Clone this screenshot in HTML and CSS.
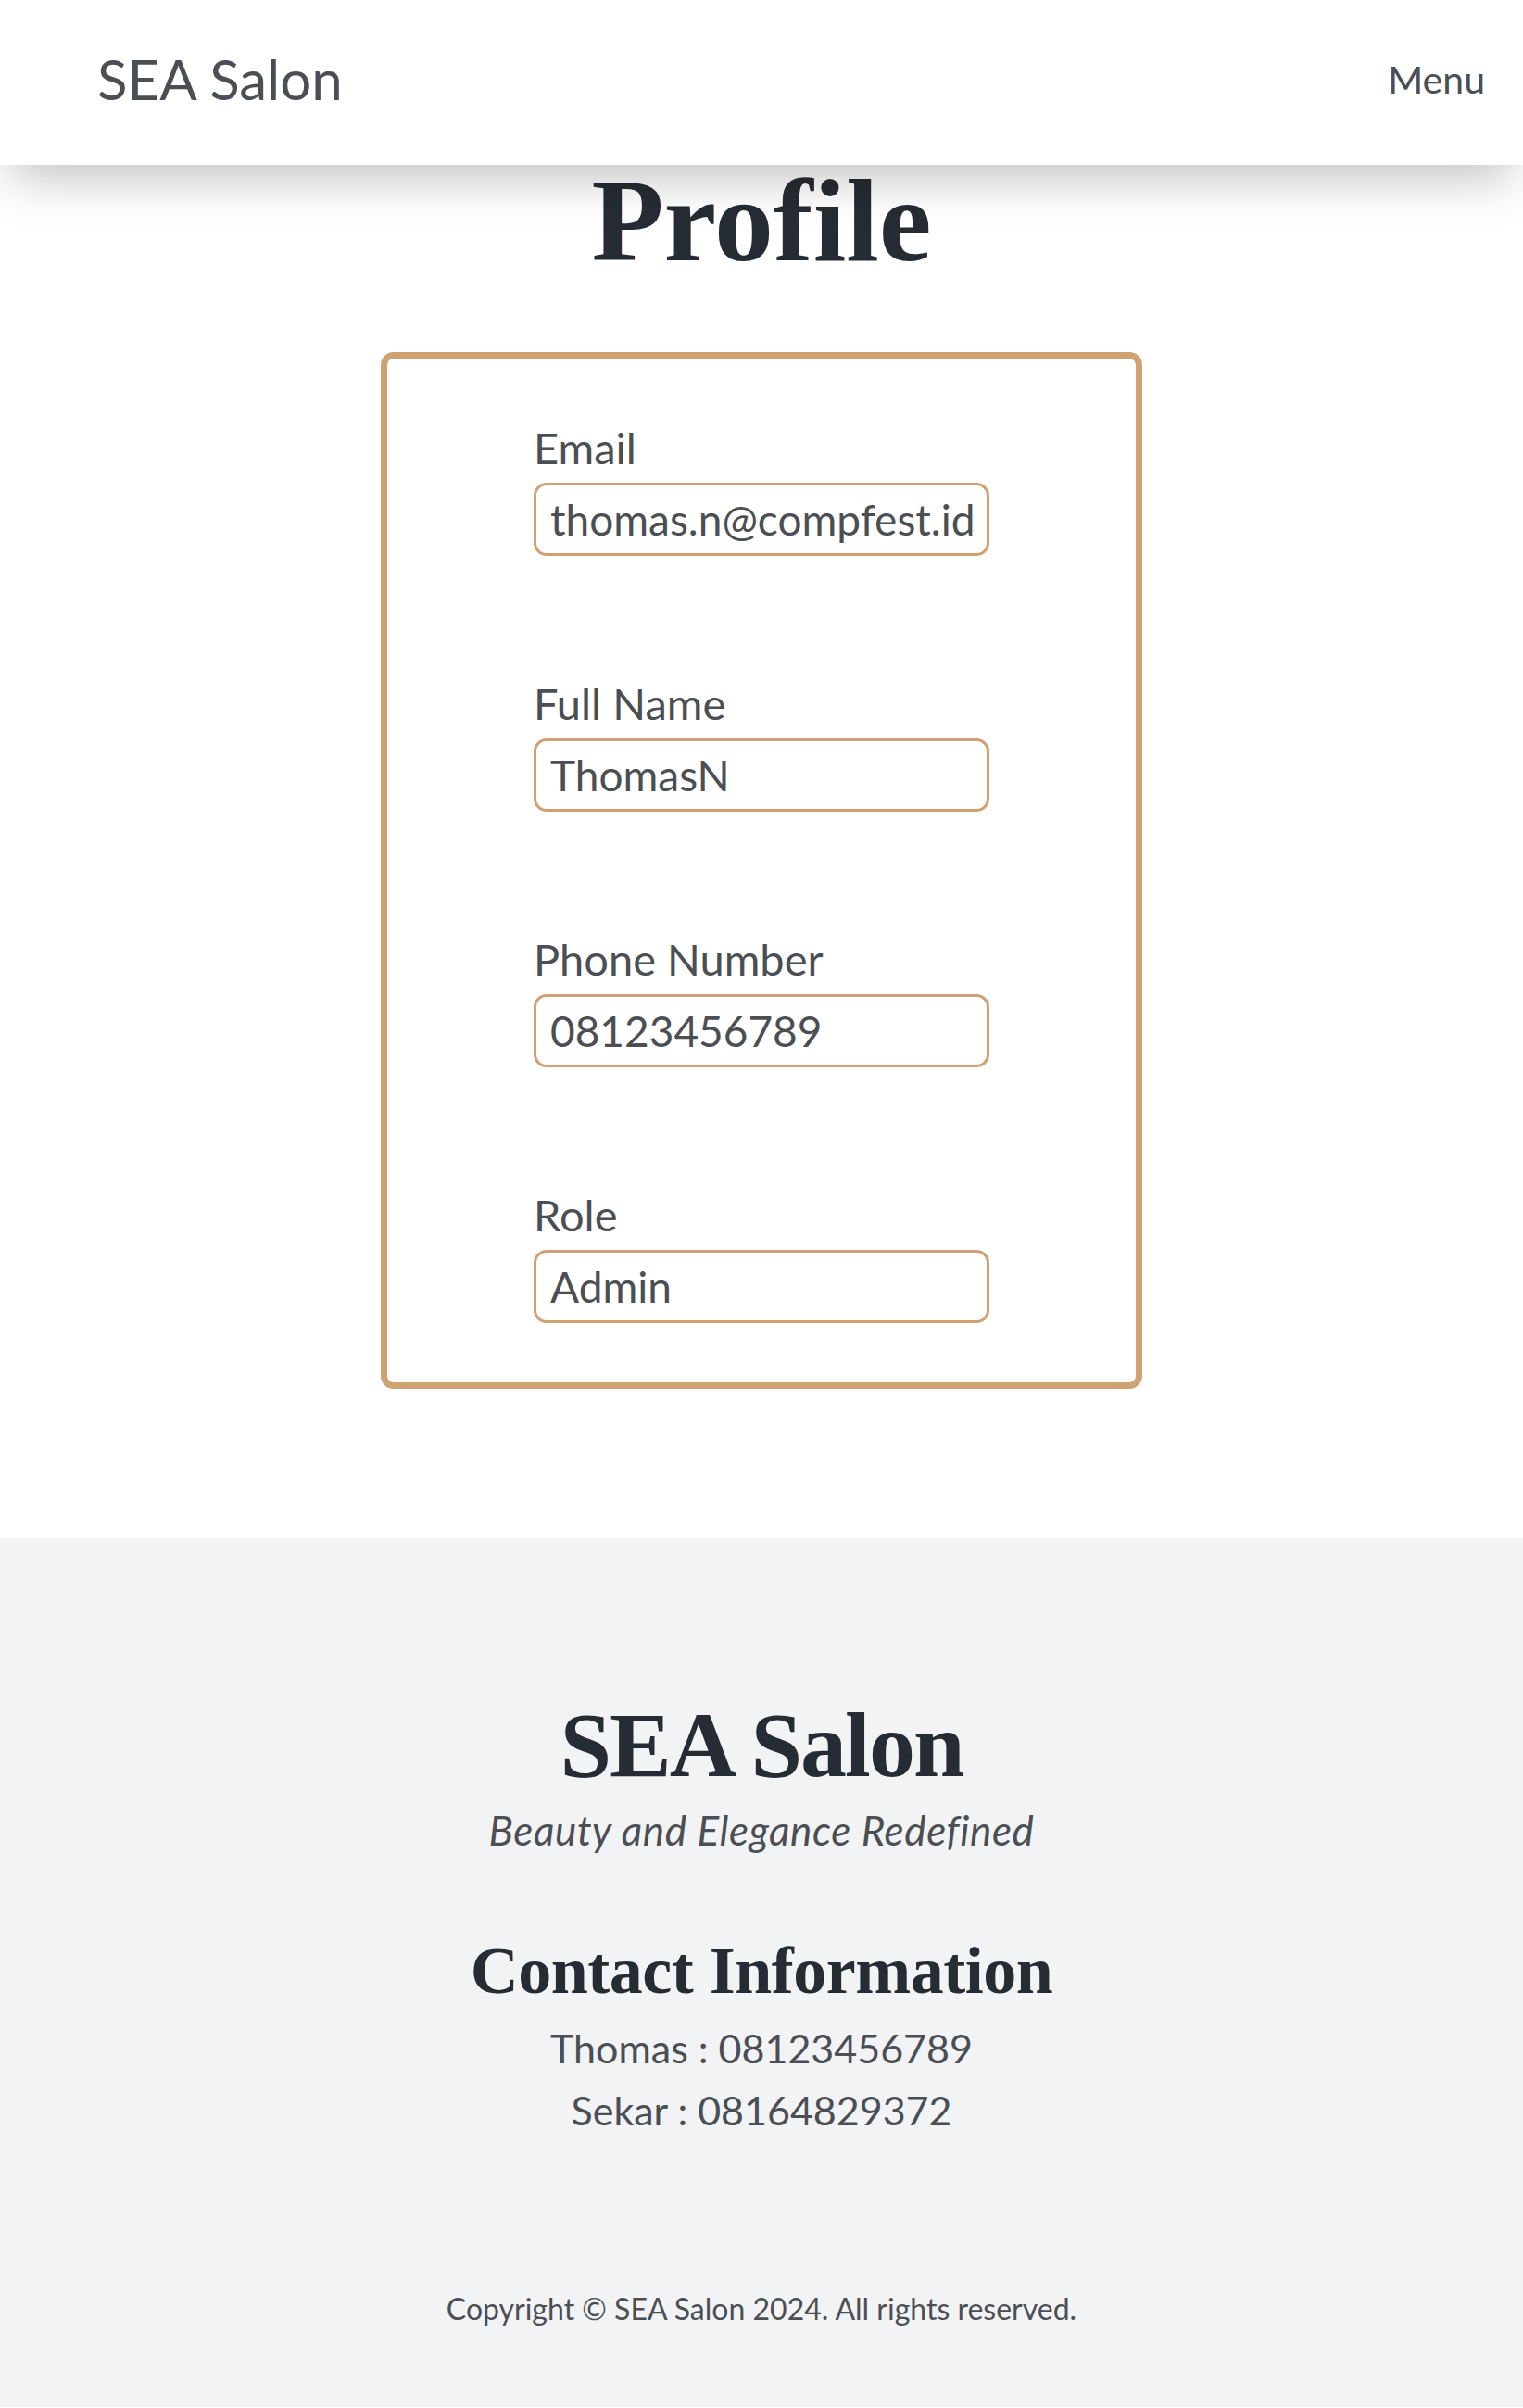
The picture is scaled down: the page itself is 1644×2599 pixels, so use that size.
FILE: index.html
```html
<!DOCTYPE html>
<html lang="en">
<head>
<meta charset="utf-8">
<title>SEA Salon - Profile</title>
<link rel="stylesheet" href="styles.css">
</head>
<body>
<header class="site-header">
  <div class="brand">SEA Salon</div>
  <div class="menu">Menu</div>
</header>
<main class="main">
  <h1 class="page-title">Profile</h1>
  <section class="profile-card">
    <div class="field">
      <label class="field-label">Email</label>
      <div class="field-input">thomas.n@compfest.id</div>
    </div>
    <div class="field">
      <label class="field-label">Full Name</label>
      <div class="field-input">ThomasN</div>
    </div>
    <div class="field">
      <label class="field-label">Phone Number</label>
      <div class="field-input">08123456789</div>
    </div>
    <div class="field">
      <label class="field-label">Role</label>
      <div class="field-input">Admin</div>
    </div>
  </section>
</main>
<footer class="site-footer">
  <h2 class="footer-brand">SEA Salon</h2>
  <p class="tagline">Beauty and Elegance Redefined</p>
  <h3 class="contact-title">Contact Information</h3>
  <p class="contact-line">Thomas : 08123456789</p>
  <p class="contact-line">Sekar : 08164829372</p>
  <p class="copyright">Copyright © SEA Salon 2024. All rights reserved.</p>
</footer>
</body>
</html>
```
FILE: styles.css
```css
* { box-sizing: border-box; }
html, body { margin: 0; padding: 0; }
body {
  font-family: Lato, "Noto Sans", sans-serif;
  color: #4b4f54;
  background: #ffffff;
}
.site-header {
  position: relative;
  z-index: 2;
  height: 178px;
  display: flex;
  justify-content: space-between;
  align-items: center;
  padding: 0 41px 8px 105px;
  background: #ffffff;
  box-shadow: 0 25px 50px -12px rgba(0, 0, 0, 0.25);
}
.brand {
  font-size: 60px;
  line-height: 72px;
  color: #4b4f54;
}
.menu {
  font-size: 41px;
  line-height: 49px;
  color: #4b4f54;
}
.main {
  padding-bottom: 161px;
}
.page-title {
  margin: 0;
  text-align: center;
  font-family: "Liberation Serif", serif;
  font-weight: 700;
  font-size: 128px;
  line-height: 120px;
  letter-spacing: 0;
  color: #262c33;
}
.profile-card {
  width: 50%;
  margin: 82px auto 0;
  border: 7px solid #cfa173;
  border-radius: 14px;
  padding: 68px 0 64px;
  display: flex;
  flex-direction: column;
  align-items: center;
  gap: 131px;
}
.field {
  width: 492px;
  display: flex;
  flex-direction: column;
  gap: 10px;
}
.field-label {
  font-size: 47px;
  line-height: 56px;
  color: #4b4f54;
}
.field-input {
  height: 79px;
  border: 3px solid #cfa173;
  border-radius: 14px;
  padding: 0 15px;
  display: flex;
  align-items: center;
  font-size: 46px;
  line-height: 56px;
  color: #4b4f54;
  white-space: nowrap;
  overflow: hidden;
}
.site-footer {
  background: #f2f3f5;
  padding: 164px 20px 87px;
  text-align: center;
}
.footer-brand {
  margin: 0;
  font-family: "Liberation Serif", serif;
  font-weight: 700;
  font-size: 100px;
  line-height: 120px;
  letter-spacing: -2px;
  color: #262c33;
}
.tagline {
  margin: 6px 0 0;
  font-style: italic;
  font-size: 44px;
  line-height: 50px;
  letter-spacing: 0.6px;
  color: #4b4f54;
}
.contact-title {
  margin: 84px 0 0;
  font-family: "Liberation Serif", serif;
  font-weight: 700;
  font-size: 72px;
  line-height: 86px;
  letter-spacing: -0.5px;
  color: #262c33;
}
.contact-line {
  margin: 0;
  font-size: 43px;
  line-height: 67px;
  color: #4b4f54;
}
.contact-title + .contact-line {
  margin-top: 7px;
}
.copyright {
  margin: 162px 0 0;
  font-size: 32px;
  line-height: 38px;
  color: #4b4f54;
}
```
